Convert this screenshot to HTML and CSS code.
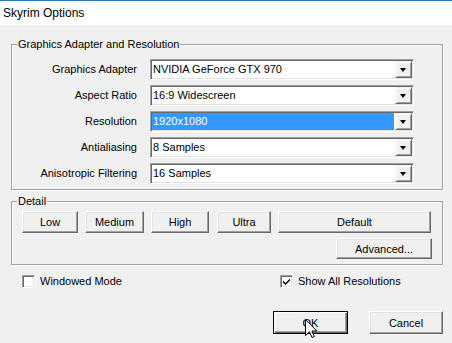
FILE: index.html
```html
<!DOCTYPE html>
<html>
<head>
<meta charset="utf-8">
<title>Skyrim Options</title>
<link rel="stylesheet" href="styles.css">
</head>
<body>
<div class="window">
  <div class="titlebar">Skyrim Options</div>
  <div class="client">
    <div class="group group-gfx">
      <span class="group-title">Graphics Adapter and Resolution</span>
      <div class="form">
        <span class="label">Graphics Adapter</span>
        <div class="combo"><span class="value">NVIDIA GeForce GTX 970</span><span class="arrow"></span></div>
        <span class="label">Aspect Ratio</span>
        <div class="combo"><span class="value">16:9 Widescreen</span><span class="arrow"></span></div>
        <span class="label">Resolution</span>
        <div class="combo"><span class="value selected">1920x1080</span><span class="arrow"></span></div>
        <span class="label">Antialiasing</span>
        <div class="combo"><span class="value">8 Samples</span><span class="arrow"></span></div>
        <span class="label">Anisotropic Filtering</span>
        <div class="combo"><span class="value">16 Samples</span><span class="arrow"></span></div>
      </div>
    </div>
    <div class="group group-detail">
      <span class="group-title">Detail</span>
      <div class="preset-row">
        <button class="btn w-low">Low</button>
        <button class="btn w-medium">Medium</button>
        <button class="btn w-high">High</button>
        <button class="btn w-ultra">Ultra</button>
        <button class="btn w-default">Default</button>
      </div>
      <div class="advanced-row">
        <button class="btn btn-adv">Advanced...</button>
      </div>
    </div>
    <div class="check-row">
      <label class="check"><span class="box"></span>Windowed Mode</label>
      <label class="check"><span class="box checked"><svg width="9" height="9" viewBox="0 0 9 9"><path d="M1 3.5 L3.5 6 L8 1.5 L8 3.5 L3.5 8 L1 5.5 Z" fill="#000"/></svg></span>Show All Resolutions</label>
    </div>
    <div class="dialog-buttons">
      <button class="btn btn-ok">OK</button>
      <button class="btn btn-cancel">Cancel</button>
    </div>
  </div>
  <svg class="cursor" width="13" height="20" viewBox="0 0 13 20">
    <path d="M0.5 0.5 L0.5 16.5 L4.5 12.8 L7 18.5 L9.3 17.5 L6.9 12 L11.8 12 Z" fill="#fff" stroke="#000" stroke-width="1" stroke-linejoin="miter"/>
  </svg>
</div>
</body>
</html>
```
FILE: styles.css
```css
* { box-sizing: border-box; }
html, body { margin: 0; padding: 0; }
body {
  width: 452px;
  height: 343px;
  background: #f0f0f0;
  font-family: "Liberation Sans", Arial, sans-serif;
  font-size: 11px;
  color: #000;
  overflow: hidden;
}
.window { position: relative; width: 452px; height: 343px; }
.titlebar {
  height: 25px;
  background: #fff;
  border-top: 1px solid #2c7bb5;
  padding-left: 3px;
  font-size: 12px;
  line-height: 24px;
  color: #000;
}
.client {
  padding: 19px 9px 0 11px;
}
.group {
  position: relative;
  border: 1px solid #a0a0a0;
  box-shadow: 1px 1px 0 #fff, inset 1px 1px 0 #fff;
}
.group-title {
  position: absolute;
  top: -7px;
  left: 5px;
  padding: 0 1px;
  background: #f0f0f0;
  line-height: 13px;
}
.group-gfx { padding: 14px 0 5px 0; }
.form {
  display: grid;
  grid-template-columns: 125px 264px;
  column-gap: 13px;
  row-gap: 5px;
}
.label {
  text-align: right;
  line-height: 21px;
  height: 21px;
}
.combo {
  display: flex;
  height: 21px;
  padding: 1px;
  background: #fff;
  border: 1px solid;
  border-color: #a0a0a0 #fff #fff #a0a0a0;
  box-shadow: inset 1px 1px 0 #696969, inset -1px -1px 0 #e3e3e3;
}
.value {
  flex: 1;
  margin-right: 1px;
  padding-left: 1px;
  line-height: 17px;
  white-space: nowrap;
}
.value.selected { background: #3399ff; color: #fff; }
.arrow {
  position: relative;
  width: 17px;
  height: 17px;
  background: #f0f0f0;
  border: 1px solid;
  border-color: #f0f0f0 #696969 #696969 #f0f0f0;
  box-shadow: inset 1px 1px 0 #fff, inset -1px -1px 0 #a0a0a0;
}
.arrow::after {
  content: "";
  position: absolute;
  left: 4px;
  top: 6px;
  border-left: 3.5px solid transparent;
  border-right: 3.5px solid transparent;
  border-top: 4px solid #000;
}
.group-detail {
  margin-top: 11px;
  padding: 9px 10px 5px 10px;
}
.btn {
  font-family: "Liberation Sans", Arial, sans-serif;
  font-size: 11px;
  color: #000;
  background: #f0f0f0;
  border: 1px solid;
  border-color: #fff #696969 #696969 #fff;
  box-shadow: inset -1px -1px 0 #a0a0a0, inset 1px 1px 0 #e3e3e3;
  padding: 0;
  margin: 0;
  height: 22px;
  line-height: 18px;
  text-align: center;
}
.preset-row { display: flex; gap: 7px; }
.w-low { width: 56px; }
.w-medium { width: 59px; }
.w-high { width: 58px; }
.w-ultra { width: 54px; margin-left: 1px; }
.w-default { width: 153px; }
.advanced-row { display: flex; justify-content: flex-end; margin-top: 5px; }
.btn-adv { width: 96px; height: 21px; }
.check-row {
  display: grid;
  grid-template-columns: 258px auto;
  margin-top: 10px;
  padding-left: 11px;
  height: 13px;
}
.check {
  display: flex;
  align-items: center;
  gap: 5px;
  line-height: 13px;
}
.box {
  display: inline-flex;
  align-items: center;
  justify-content: center;
  width: 13px;
  height: 13px;
  background: #fff;
  border: 1px solid;
  border-color: #a0a0a0 #fff #fff #a0a0a0;
  box-shadow: inset 1px 1px 0 #696969, inset -1px -1px 0 #e3e3e3;
}
.dialog-buttons {
  display: flex;
  justify-content: flex-end;
  gap: 21px;
  margin-top: 23px;
}
.btn-ok {
  width: 75px;
  height: 23px;
  border: 1px solid #000;
  box-shadow: inset 1px 1px 0 #fff, inset -1px -1px 0 #696969, inset -2px -2px 0 #a0a0a0;
}
.btn-cancel { width: 74px; height: 23px; }
.cursor {
  position: absolute;
  left: 305px;
  top: 319px;
}
```
